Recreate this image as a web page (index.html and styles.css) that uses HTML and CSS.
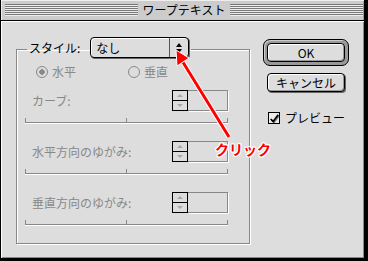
FILE: index.html
```html
<!DOCTYPE html>
<html lang="ja">
<head>
    <meta charset="UTF-8">
    <title>ワープテキスト</title>
    <link rel="stylesheet" href="styles.css">
</head>
<body>
  <div class="window">
    <div class="titlebar">
      <span class="stripes"></span>
      <span class="title">ワープテキスト</span>
      <span class="stripes"></span>
    </div>

    <div class="panel">
      <fieldset class="group">
        <legend class="group-head">
          <span class="style-label">スタイル:</span>
          <div class="popup">
            <span class="popup-value">なし</span>
            <span class="popup-arrows"><i class="tri-up"></i><i class="tri-down"></i></span>
          </div>
        </legend>

        <div class="radios">
          <span class="radio"><span class="radio-dot on"></span>水平</span>
          <span class="radio"><span class="radio-dot"></span>垂直</span>
        </div>

        <div class="params">
          <div class="param">
            <div class="param-row">
              <span>カーブ:</span>
              <div class="spinner"><span class="spin-arrows"><i></i><i></i></span><span class="spin-field"></span></div>
            </div>
            <div class="slider"></div>
          </div>
          <div class="param">
            <div class="param-row">
              <span>水平方向のゆがみ:</span>
              <div class="spinner"><span class="spin-arrows"><i></i><i></i></span><span class="spin-field"></span></div>
            </div>
            <div class="slider"></div>
          </div>
          <div class="param">
            <div class="param-row">
              <span>垂直方向のゆがみ:</span>
              <div class="spinner"><span class="spin-arrows"><i></i><i></i></span><span class="spin-field"></span></div>
            </div>
            <div class="slider"></div>
          </div>
        </div>
      </fieldset>

      <div class="actions">
        <div class="default-ring"><button class="btn btn-ok">OK</button></div>
        <button class="btn btn-cancel">キャンセル</button>
        <label class="check">
          <span class="check-box">
            <svg width="12" height="12" viewBox="0 0 12 12">
              <path d="M2 6 L5 9 L11 1" fill="none" stroke="#777" stroke-width="2" transform="translate(1 1)"/>
              <path d="M2 6 L5 9 L11 1" fill="none" stroke="#000" stroke-width="2"/>
            </svg>
          </span>
          プレビュー
        </label>
      </div>
    </div>
  </div>

  <!-- annotation -->
  <svg class="callout" width="368" height="261">
    <line x1="229" y1="137" x2="181" y2="59" stroke="#fff" stroke-width="5"/>
    <line x1="229" y1="137" x2="181" y2="59" stroke="#f00" stroke-width="3"/>
    <polygon points="176,50 189,58 177,66" fill="#f00" stroke="#fff" stroke-width="1"/>
  </svg>
  <span class="callout-text">クリック</span>
</body>
</html>
```

FILE: styles.css
```css
* {
    box-sizing: border-box;
}
html {
    background: #000;
}
body {
    margin: 0;
    position: relative;
    font-family: "Noto Sans CJK JP", sans-serif;
    font-size: 12px;
    line-height: 14px;
    color: #000;
}

.window {
    width: 365px;
    height: 259px;
    background: #ddd;
    border: 1px solid #000;
    border-top: 0;
    display: flex;
    flex-direction: column;
}

.titlebar {
    height: 21px;
    flex: none;
    display: flex;
    align-items: center;
    padding: 0 1px 0 4px;
    background: #ccc;
    border-bottom: 1px solid #000;
    box-shadow: inset 1px 1px #eee, inset -1px 0 #999;
}
.stripes {
    flex: 1;
    height: 12px;
    background: repeating-linear-gradient(#777 0 1px, #eee 1px 2px);
}
.title {
    padding: 0 5px;
}

.panel {
    flex: 1;
    display: flex;
    padding: 16px 0 0 15px;
    box-shadow: inset 1px 1px #fff, inset -1px -1px #888;
}

/* group box */
.group {
    margin: 0;
    min-width: 0;
    width: 234px;
    align-self: flex-start;
    padding: 3px 21px 18px 8px;
    border: 1px solid #888;
    box-shadow: inset 1px 1px #fff, 1px 1px #fff;
}
.group-head {
    display: flex;
    align-items: center;
    gap: 10px;
    margin-left: 2px;
    padding: 0 2px 4px;
}

.popup {
    width: 99px;
    height: 21px;
    display: flex;
    border: 1px solid #000;
    border-radius: 4px;
    background: #ddd;
    box-shadow: inset 1px 1px #fff, 1px 1px #666;
}
.popup-value {
    flex: 1;
    padding: 3px 0 0 5px;
}
.popup-arrows {
    width: 19px;
    border-left: 1px solid #555;
    display: flex;
    flex-direction: column;
    align-items: center;
    justify-content: center;
    gap: 2px;
}
.tri-up, .tri-down {
    width: 0;
    height: 0;
    border-left: 3.5px solid transparent;
    border-right: 3.5px solid transparent;
}
.tri-up {
    border-bottom: 4px solid #000;
}
.tri-down {
    border-top: 4px solid #000;
}

.radios {
    display: flex;
    height: 14px;
    padding-left: 11px;
    color: #888;
}
.radio {
    width: 92px;
    display: flex;
    align-items: center;
    gap: 4px;
}
.radio-dot {
    width: 12px;
    height: 12px;
    border: 1px solid #888;
    border-radius: 50%;
    background: #ddd;
}
.radio-dot.on {
    background: radial-gradient(circle, #888 0 2.5px, #ddd 3px);
}

.params {
    margin-top: 11px;
    display: flex;
    flex-direction: column;
    gap: 18px;
}
.param-row {
    height: 21px;
    display: flex;
    align-items: center;
    justify-content: space-between;
    padding-left: 7px;
    color: #888;
}
.spinner {
    display: flex;
    height: 21px;
}
.spin-arrows {
    width: 16px;
    display: flex;
    flex-direction: column;
    border: 1px solid #000;
}
.spin-arrows i {
    flex: 1;
    display: flex;
    align-items: center;
    justify-content: center;
}
.spin-arrows i:first-child {
    border-bottom: 1px solid #000;
}
.spin-arrows i::after {
    content: "";
    border-left: 3px solid transparent;
    border-right: 3px solid transparent;
}
.spin-arrows i:first-child::after {
    border-bottom: 3px solid #aaa;
}
.spin-arrows i:last-child::after {
    border-top: 3px solid #aaa;
}
.spin-field {
    width: 40px;
    border: 1px solid #888;
    border-left: 0;
    box-shadow: 1px 1px #fff;
}

.slider {
    margin-top: 7px;
    height: 5px;
    border-bottom: 1px solid #888;
    box-shadow: 0 1px #fff;
    background:
        linear-gradient(#888, #888) 0 0 / 1px 100% no-repeat,
        linear-gradient(#888, #888) 101px 0 / 1px 100% no-repeat,
        linear-gradient(#888, #888) 100% 0 / 1px 100% no-repeat;
}

/* buttons */
.actions {
    margin-left: 13px;
    padding-top: 2px;
    display: flex;
    flex-direction: column;
    align-items: flex-start;
}
.default-ring {
    border: 1px solid #000;
    border-radius: 7px;
    padding: 3px;
    background: #999;
    box-shadow: inset 1px 1px #ccc;
}
.btn {
    width: 78px;
    height: 19px;
    padding: 0;
    font: inherit;
    color: #000;
    background: #ddd;
    border: 1px solid #000;
    border-radius: 4px;
    box-shadow: inset 1px 1px #fff, inset -1px -1px #999;
}
.btn-cancel {
    margin: 7px 0 0 4px;
    box-shadow: inset 1px 1px #fff, inset -1px -1px #999, 1px 1px #666;
}

.check {
    margin: 19px 0 0 5px;
    display: flex;
    align-items: center;
    gap: 5px;
}
.check-box {
    width: 12px;
    height: 12px;
    border: 1px solid #000;
    background: #eee;
    display: flex;
    overflow: hidden;
}

/* red annotation */
.callout {
    position: absolute;
    top: 0;
    left: 0;
    pointer-events: none;
}
.callout-text {
    position: absolute;
    left: 215px;
    top: 142px;
    font-size: 14px;
    font-weight: bold;
    color: #f00;
    text-shadow: 1px 0 #fff, -1px 0 #fff, 0 1px #fff, 0 -1px #fff,
        1px 1px #fff, -1px -1px #fff, 1px -1px #fff, -1px 1px #fff;
}
```
